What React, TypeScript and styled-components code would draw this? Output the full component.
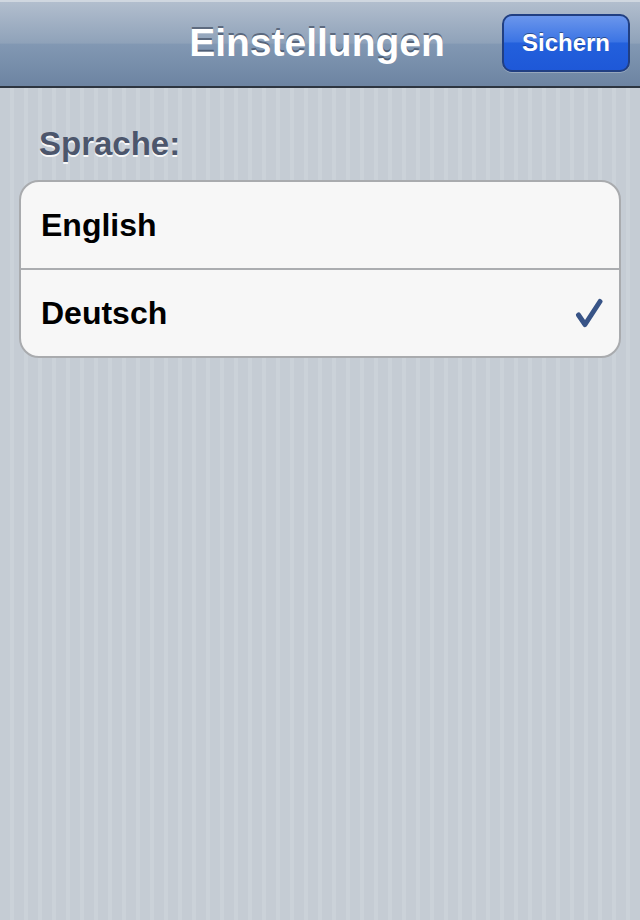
import React from "react";
import styled, { createGlobalStyle } from "styled-components";

const Global = createGlobalStyle`
  html, body { margin: 0; padding: 0; }
  body {
    font-family: "Liberation Sans", Arial, Helvetica, sans-serif;
    background: #c5ccd4;
  }
`;

const Screen = styled.div`
  width: 640px;
  height: 920px;
  display: flex;
  flex-direction: column;
  overflow: hidden;
  background-color: #c5ccd4;
  background-image: repeating-linear-gradient(
    90deg,
    #c5ccd4 0px,
    #c5ccd4 10px,
    #cbd2d9 10px,
    #cbd2d9 14px
  );
`;

const NavBar = styled.header`
  flex: 0 0 auto;
  height: 88px;
  box-sizing: border-box;
  border-top: 2px solid #d0d7e0;
  border-bottom: 2px solid #2d3540;
  background: linear-gradient(
    180deg,
    #b2bece 0%,
    #8fa2b9 49%,
    #8298b3 50%,
    #6d84a2 100%
  );
  display: grid;
  grid-template-columns: 1fr auto 1fr;
  align-items: center;
  padding: 0 10px 0 0;
`;

const Title = styled.h1`
  grid-column: 2;
  margin: 0;
  font-size: 39px;
  font-weight: bold;
  color: #ffffff;
  text-shadow: 0 -2px 0 rgba(40, 50, 70, 0.55);
  padding: 0 0 2px 4px;
`;

const NavButton = styled.button`
  grid-column: 3;
  justify-self: end;
  width: 128px;
  height: 58px;
  box-sizing: border-box;
  margin-bottom: 2px;
  border: 2px solid #213f82;
  border-radius: 10px;
  background: linear-gradient(
    180deg,
    #6b96ec 0%,
    #3b74e4 48%,
    #2360dc 50%,
    #1e58d8 100%
  );
  box-shadow: 0 1px 0 rgba(255, 255, 255, 0.25);
  color: #ffffff;
  font-family: "Liberation Sans", Arial, sans-serif;
  font-weight: bold;
  font-size: 24px;
  text-shadow: 0 -1px 0 rgba(0, 0, 0, 0.4);
  padding: 0;
`;

const Content = styled.main`
  flex: 1;
  padding: 36px 19px 0 19px;
  display: flex;
  flex-direction: column;
`;

const SectionLabel = styled.h2`
  margin: 0 0 16px 20px;
  font-size: 33px;
  line-height: 40px;
  font-weight: bold;
  color: #4c566c;
  text-shadow: 0 2px 0 rgba(255, 255, 255, 0.9);
`;

const Group = styled.ul`
  list-style: none;
  margin: 0;
  padding: 0;
  width: 602px;
  box-sizing: border-box;
  border: 2px solid #a9abae;
  border-radius: 20px;
  background: #f7f7f7;
  overflow: hidden;
`;

const Row = styled.li<{ $last?: boolean }>`
  height: 86px;
  display: flex;
  align-items: center;
  justify-content: space-between;
  padding: 0 16px 0 20px;
  border-bottom: ${(p) => (p.$last ? "none" : "2px solid #abadb0")};
  font-size: 32px;
  font-weight: bold;
  color: #000000;
`;

const Check = () => (
  <svg width="28" height="30" viewBox="0 0 28 30">
    <path
      d="M3.5 17 L10 26.5 L25 3.5"
      fill="none"
      stroke="#385487"
      strokeWidth="5"
      strokeLinecap="round"
      strokeLinejoin="round"
    />
  </svg>
);

export default function App() {
  return (
    <>
      <Global />
      <Screen>
        <NavBar>
          <Title>Einstellungen</Title>
          <NavButton>Sichern</NavButton>
        </NavBar>
        <Content>
          <SectionLabel>Sprache:</SectionLabel>
          <Group>
            <Row>English</Row>
            <Row $last>
              Deutsch
              <Check />
            </Row>
          </Group>
        </Content>
      </Screen>
    </>
  );
}
